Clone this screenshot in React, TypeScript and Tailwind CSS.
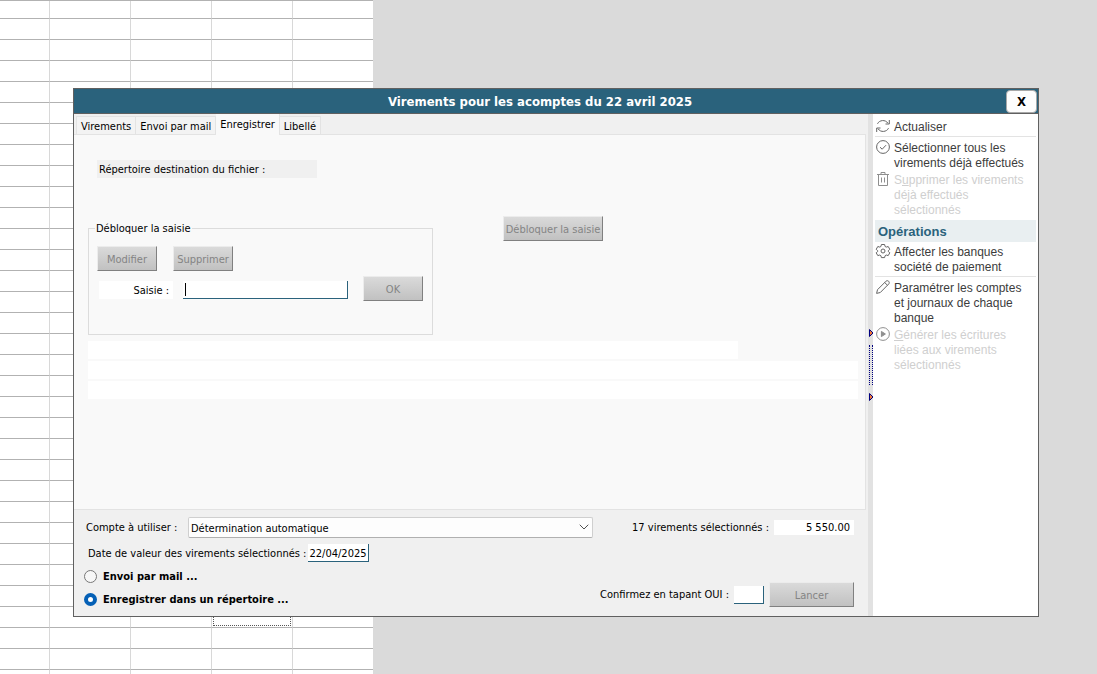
import React, { useState } from 'react';
import clsx from 'clsx';
import { ChevronDown } from 'lucide-react';

const TABS = ['Virements', 'Envoi par mail', 'Enregistrer', 'Libellé'];

const SHEET_ROWS = Array.from({ length: 45 }, (_, index) => index);
const SHEET_COLUMNS = [0, 1, 2, 3, 4];
const ACTIVE_CELL = { row: 29, column: 3 };

interface PushButtonProps {
  className?: string;
  children: React.ReactNode;
}

const PushButton: React.FC<PushButtonProps> = ({ className, children }) => (
  <button
    type="button"
    disabled
    className={clsx(
      'h-[25px] shrink-0 border border-t-[#ececec] border-r-[#808080] border-b-[#808080] border-l-[#ececec] bg-linear-to-b from-[#dadada] to-[#c1c1c1] pt-0.5 text-center whitespace-nowrap text-[#848484]',
      className
    )}
  >
    {children}
  </button>
);

const svgProps = {
  viewBox: '0 0 14 14',
  fill: 'none',
  stroke: 'currentColor',
  strokeWidth: 1,
  className: 'h-3.5 w-3.5 shrink-0 overflow-visible',
  'aria-hidden': true,
};

const RefreshIcon = () => (
  <svg {...svgProps}>
    <path d="M1.5 4.8C3.2 1 9.4.2 12 4.3M13.3 1v4H9.5M12.5 9.2C10.8 13 4.6 13.8 2 9.7M.7 13V9h3.8" />
  </svg>
);

const CheckCircleIcon = () => (
  <svg {...svgProps}>
    <circle cx="7" cy="7" r="6.4" />
    <path d="M4 7.2l2.2 2L10 5.2" />
  </svg>
);

const TrashIcon = () => (
  <svg {...svgProps}>
    <path d="M1 2.5h12M5 2.5v-2h4v2M2.5 2.5v11h9v-11M5.5 5.5v5M8.5 5.5v5" />
  </svg>
);

const GearIcon = () => (
  <svg {...svgProps}>
    <path d="M5.4.5h3.2l.5 2 1.1.6 2-.6 1.6 2.8L12.3 6.7v.8l1.5 1.3-1.6 2.8-2-.6-1.1.7-.5 1.9H5.4l-.5-1.9-1.1-.7-2 .6L.2 8.8l1.5-1.3v-.8L.2 5.3l1.6-2.8 2 .6 1.1-.6z" strokeLinejoin="round" />
    <circle cx="7" cy="7" r="2" />
  </svg>
);

const PencilIcon = () => (
  <svg {...svgProps}>
    <path d="M.6 13.4l.9-3.7L10 1.2c1.8-1.6 4.3.9 2.8 2.7l-8.5 8.6zM8.7 2.5l2.8 2.8" strokeLinejoin="round" />
  </svg>
);

const PlayCircleIcon = () => (
  <svg {...svgProps}>
    <circle cx="7" cy="7" r="6.4" />
    <path d="M5.4 4.4v5.2L9.4 7z" fill="currentColor" />
  </svg>
);

interface SideActionProps {
  icon: React.ReactNode;
  disabled?: boolean;
  separator?: boolean;
  children: React.ReactNode;
}

const SideAction: React.FC<SideActionProps> = ({ icon, disabled, separator, children }) => (
  <button
    type="button"
    disabled={disabled}
    className={clsx(
      'flex w-full items-start gap-1 pt-[3px] pl-px text-left text-[12px] leading-[15px]',
      disabled ? 'text-[#cfcfcf]' : 'text-[#3c3c3c]',
      separator ? 'mb-px border-b border-[#e3e3e3] pb-px' : '-mb-px'
    )}
  >
    <span className={clsx('-mt-px', disabled ? 'text-[#8f8f8f]' : 'text-[#666666]')}>{icon}</span>
    <span className="pr-1">{children}</span>
  </button>
);

const SplitterArrow = () => (
  <svg viewBox="0 0 4 8" className="h-2 w-1" aria-hidden="true">
    <path d="M.5.5v7L4 4z" fill="#f07838" stroke="#000080" />
  </svg>
);

const Spreadsheet: React.FC = () => (
  <table className="w-[373px] table-fixed border-separate border-spacing-0 border-t border-[#b2b2b2] bg-white">
    <colgroup>
      <col className="w-[50px]" />
      <col className="w-[81px]" />
      <col className="w-[81px]" />
      <col className="w-[81px]" />
      <col />
    </colgroup>
    <tbody>
      {SHEET_ROWS.map((row) => (
        <tr key={row} className={row === 0 ? 'h-[18px]' : 'h-[21px]'}>
          {SHEET_COLUMNS.map((column) => (
            <td
              key={column}
              className={clsx('border-b border-b-[#b2b2b2] p-0', column < 4 && 'border-r border-r-[#d8d8d8]')}
            >
              {row === ACTIVE_CELL.row && column === ACTIVE_CELL.column && (
                <div className="mx-px h-[18px] border border-dotted border-[#555555]" />
              )}
            </td>
          ))}
        </tr>
      ))}
    </tbody>
  </table>
);

const App: React.FC = () => {
  const [activeTab, setActiveTab] = useState('Enregistrer');
  const [mode, setMode] = useState('repertoire');
  const [entry, setEntry] = useState('');
  const [valueDate, setValueDate] = useState('22/04/2025');
  const [confirmation, setConfirmation] = useState('');

  return (
    <div className="relative h-screen overflow-hidden bg-[#dadada] font-['DejaVu_Sans_Condensed','DejaVu_Sans',sans-serif] text-[11px] leading-[15px] text-black">
      <Spreadsheet />

      <div
        role="dialog"
        aria-labelledby="dialog-title"
        className="absolute top-[88px] right-[58px] left-[73px] border border-[#606060] bg-[#f0f0f0]"
      >
        <header className="flex h-[25px] items-center border-b border-[#606060] bg-[#2a627c]">
          <h1 id="dialog-title" className="flex-1 text-center text-[13px] font-bold text-white">
            Virements pour les acomptes du 22 avril 2025
          </h1>
          <button
            type="button"
            className="mr-px h-[23px] w-[31px] rounded-sm border border-[#a8a8a8] bg-[#fdfdfd] text-[13px] font-bold"
          >
            X
          </button>
        </header>

        <div className="flex">
          <main className="min-w-0 flex-1">
            <div role="tablist" className="flex h-5 items-end pl-0.5">
              {TABS.map((tab) => (
                <button
                  key={tab}
                  type="button"
                  role="tab"
                  aria-selected={tab === activeTab}
                  onClick={() => setActiveTab(tab)}
                  className={clsx(
                    'border-[#e3e3e3] px-1 whitespace-nowrap',
                    tab === activeTab
                      ? 'relative -mb-px h-[21px] border-r bg-[#f9f9f9]'
                      : 'h-[18px] border-t border-r bg-[#f3f3f3] pt-px first:border-l'
                  )}
                >
                  {tab}
                </button>
              ))}
            </div>

            <section
              role="tabpanel"
              className="mr-0.5 border border-l-0 border-[#e3e3e3] bg-[#f9f9f9] pt-[25px] pr-[7px] pb-[110px] pl-3.5"
            >
              <div className="ml-[9px] h-[18px] w-[220px] bg-[#f0f0f0] px-0.5 leading-5">
                Répertoire destination du fichier :
              </div>

              <div className="mt-[38px] flex items-start gap-[70px]">
                <fieldset className="mt-1 h-[115px] w-[345px] shrink-0 border border-[#dcdcdc] pl-2">
                  <legend className="-ml-0.5 px-px pt-px">Débloquer la saisie</legend>
                  <div className="mt-2.5 flex gap-4">
                    <PushButton className="w-[60px]">Modifier</PushButton>
                    <PushButton className="w-[60px]">Supprimer</PushButton>
                  </div>
                  <div className="mt-[5px] flex items-end">
                    <div className="flex gap-2.5 pb-0.5 pl-0.5">
                      <label htmlFor="saisie" className="h-[18px] w-[74px] bg-white pr-1 text-right leading-5">
                        Saisie :
                      </label>
                      <div className="flex h-[18px] w-[165px] items-center border-r border-b border-[#2a627c] bg-white pl-0.5">
                        <span className="h-[13px] w-px bg-black" />
                        <input
                          id="saisie"
                          type="text"
                          value={entry}
                          onChange={(e) => setEntry(e.target.value)}
                          className="min-w-0 flex-1 outline-none"
                        />
                      </div>
                    </div>
                    <PushButton className="ml-[15px] w-[60px]">OK</PushButton>
                  </div>
                </fieldset>
                <PushButton className="w-[100px]">Débloquer la saisie</PushButton>
              </div>

              <div className="mt-1.5 flex flex-col gap-0.5">
                <div className="mr-[120px] h-[18px] bg-white" />
                <div className="h-[18px] bg-white" />
                <div className="h-[18px] bg-white" />
              </div>
            </section>

            <footer className="flex flex-col gap-1.5 pt-[7px] pr-3.5 pb-[9px] pl-2.5">
              <div className="flex items-center">
                <label htmlFor="compte" className="w-[104px] pl-0.5">
                  Compte à utiliser :
                </label>
                <div className="relative h-[21px] max-w-[405px] flex-1">
                  <select
                    id="compte"
                    className="h-full w-full appearance-none rounded-xs border border-[#cfcfcf] border-b-[#b0b0b0] bg-[#fdfdfd] px-0.5 pt-px"
                  >
                    <option>Détermination automatique</option>
                  </select>
                  <ChevronDown
                    size={16}
                    strokeWidth={1.5}
                    className="pointer-events-none absolute top-0.5 right-px text-[#505050]"
                  />
                </div>
                <label htmlFor="total" className="ml-auto">
                  17 virements sélectionnés :
                </label>
                <output id="total" className="ml-[5px] h-[15px] w-20 bg-white pr-1 text-right">
                  5 550.00
                </output>
              </div>

              <div className="flex items-center">
                <label htmlFor="date-valeur" className="w-[224px] pl-1 whitespace-nowrap">
                  Date de valeur des virements sélectionnés :
                </label>
                <input
                  id="date-valeur"
                  type="text"
                  value={valueDate}
                  onChange={(e) => setValueDate(e.target.value)}
                  className="h-[18px] w-[61px] border-r border-b border-[#2a627c] bg-white pt-px text-center outline-none"
                />
              </div>

              <div className="flex items-end justify-between pt-px">
                <div className="flex flex-col gap-2 font-bold">
                  <label className="flex items-center gap-1.5">
                    <input
                      type="radio"
                      name="mode"
                      checked={mode === 'mail'}
                      onChange={() => setMode('mail')}
                      className="h-[13px] w-[13px] appearance-none rounded-full border border-[#777777] bg-[#f7f7f7] checked:border-4 checked:border-[#0560b6] checked:bg-white"
                    />
                    Envoi par mail ...
                  </label>
                  <label className="flex items-center gap-1.5">
                    <input
                      type="radio"
                      name="mode"
                      checked={mode === 'repertoire'}
                      onChange={() => setMode('repertoire')}
                      className="h-[13px] w-[13px] appearance-none rounded-full border border-[#777777] bg-[#f7f7f7] checked:border-4 checked:border-[#0560b6] checked:bg-white"
                    />
                    Enregistrer dans un répertoire ...
                  </label>
                </div>
                <div className="flex items-center gap-[5px]">
                  <label htmlFor="confirmation">Confirmez en tapant OUI :</label>
                  <input
                    id="confirmation"
                    type="text"
                    value={confirmation}
                    onChange={(e) => setConfirmation(e.target.value)}
                    className="h-[18px] w-[30px] border-r border-b border-[#2a627c] bg-white outline-none"
                  />
                  <PushButton className="w-[85px]">Lancer</PushButton>
                </div>
              </div>
            </footer>
          </main>

          <div className="flex w-[5px] flex-col items-end justify-center gap-2 bg-[#e2e2e2]">
            <SplitterArrow />
            <div className="h-10 w-1 border-x border-dotted border-[#000080]" />
            <SplitterArrow />
          </div>

          <aside className="w-[165px] bg-white px-0.5 pt-[3px] font-['Liberation_Sans',Arial,sans-serif]">
            <SideAction icon={<RefreshIcon />} separator>
              Actualiser
            </SideAction>
            <SideAction icon={<CheckCircleIcon />}>Sélectionner tous les virements déjà effectués</SideAction>
            <SideAction icon={<TrashIcon />} disabled>
              S<u>u</u>pprimer les virements déjà effectués sélectionnés
            </SideAction>
            <h2 className="mt-[3px] h-[22px] bg-[#e9eff1] pl-[3px] text-[13px] leading-6 font-bold text-[#2a627c]">
              Opérations
            </h2>
            <SideAction icon={<GearIcon />} separator>
              Affecter les banques société de paiement
            </SideAction>
            <SideAction icon={<PencilIcon />}>Paramétrer les comptes et journaux de chaque banque</SideAction>
            <SideAction icon={<PlayCircleIcon />} disabled>
              <u>G</u>énérer les écritures liées aux virements sélectionnés
            </SideAction>
          </aside>
        </div>
      </div>
    </div>
  );
};

export default App;
